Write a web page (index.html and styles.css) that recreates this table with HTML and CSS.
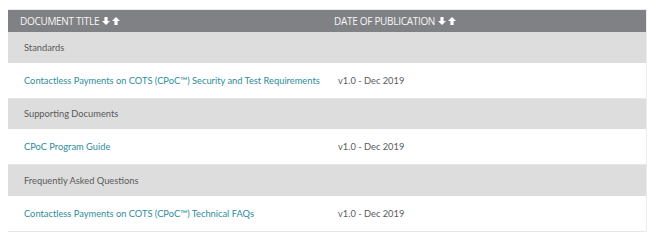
FILE: index.html
```html
<!DOCTYPE html>
<html>
<head>
<meta charset="utf-8">
<link rel="stylesheet" href="styles.css">
</head>
<body>
<div class="table">
  <div class="row head">
    <div class="cell">DOCUMENT TITLE <span class="arrows"><svg viewBox="0 0 10 10" class="arr"><path d="M3 0h4v5h3L5 10 0 5h3z"/></svg><svg viewBox="0 0 10 10" class="arr"><path d="M3 10h4V5h3L5 0 0 5h3z"/></svg></span></div>
    <div class="cell">DATE OF PUBLICATION <span class="arrows"><svg viewBox="0 0 10 10" class="arr"><path d="M3 0h4v5h3L5 10 0 5h3z"/></svg><svg viewBox="0 0 10 10" class="arr"><path d="M3 10h4V5h3L5 0 0 5h3z"/></svg></span></div>
  </div>
  <div class="row cat"><div class="cell">Standards</div><div class="cell"></div></div>
  <div class="row doc"><div class="cell"><a href="#">Contactless Payments on COTS (CPoC™) Security and Test Requirements</a></div><div class="cell date">v1.0 - Dec 2019</div></div>
  <div class="row cat"><div class="cell">Supporting Documents</div><div class="cell"></div></div>
  <div class="row doc"><div class="cell"><a href="#">CPoC Program Guide</a></div><div class="cell date">v1.0 - Dec 2019</div></div>
  <div class="row cat"><div class="cell">Frequently Asked Questions</div><div class="cell"></div></div>
  <div class="row doc"><div class="cell"><a href="#">Contactless Payments on COTS (CPoC™) Technical FAQs</a></div><div class="cell date">v1.0 - Dec 2019</div></div>
</div>
</body>
</html>
```
FILE: styles.css
```css
body {
  margin: 0;
  background: #fff;
  font-family: Lato, "Open Sans", sans-serif;
}
.table {
  margin: 9px 0 0 8px;
  width: 638px;
  border-top: 1px solid #ececec;
  border-right: 1px solid #ececec;
}
.row {
  display: grid;
  grid-template-columns: 314px 1fr;
  align-items: center;
}
.cell {
  white-space: nowrap;
}
.head {
  height: 22px;
  background: #808184;
  color: #f6f6f6;
  font-family: "Open Sans", sans-serif;
  font-size: 10px;
  letter-spacing: -0.3px;
}
.head .cell {
  padding-left: 12px;
  display: flex;
  align-items: center;
}
.arrows {
  display: inline-flex;
  gap: 2px;
  margin-left: 3px;
}
.arr {
  width: 8px;
  height: 8px;
  fill: #fff;
}
.cat {
  height: 30.67px;
  background: #dddddd;
  color: #5a5a5a;
  font-size: 9.3px;
}
.cat .cell, .doc .cell {
  padding-left: 16px;
}
.doc {
  height: 35px;
  border-bottom: 1px solid #e6e6e6;
  font-size: 9.3px;
}
.doc a {
  color: #2e8c9a;
  text-decoration: none;
}
.date {
  color: #5a5a5a;
}
```
